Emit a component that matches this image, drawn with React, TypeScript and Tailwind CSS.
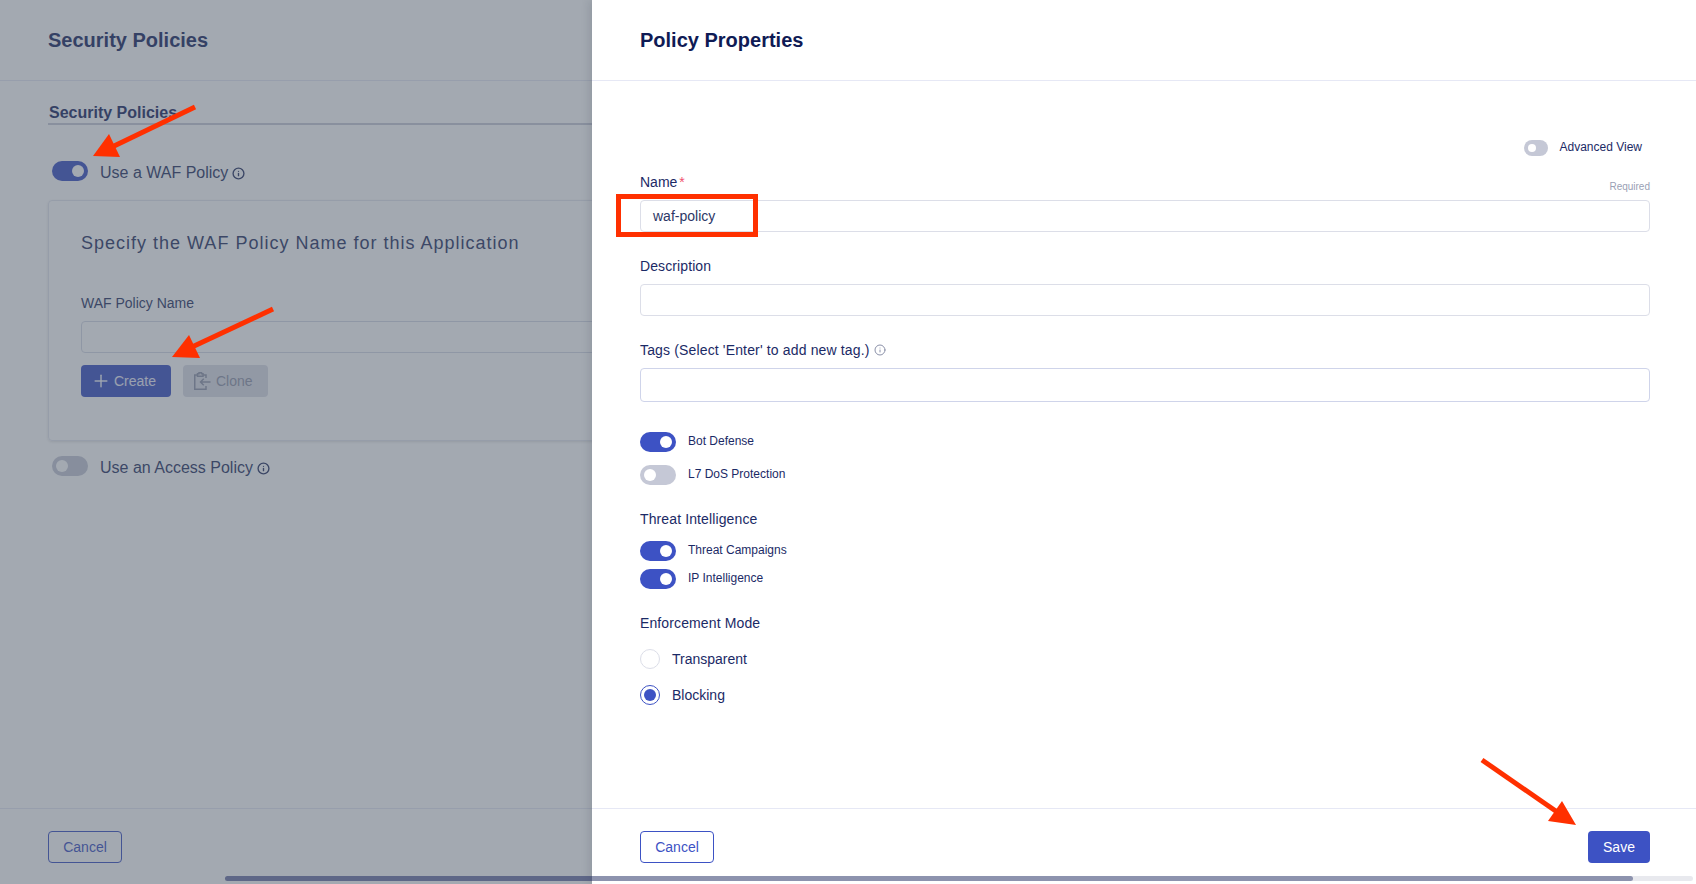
import { Info, Plus } from 'lucide-react';

const font = "font-['Liberation_Sans',Arial,sans-serif]";

function Toggle({ on, size = 'md' }: { on: boolean; size?: 'sm' | 'md' }) {
  if (size === 'sm') {
    return (
      <span className="flex h-4 w-6 shrink-0 items-center justify-start rounded-full bg-[#c5c8d6] pl-1">
        <span className="h-2 w-2 rounded-full bg-white" />
      </span>
    );
  }
  return (
    <span
      className={`flex h-5 w-9 shrink-0 items-center rounded-full px-1 ${
        on ? 'justify-end bg-[#3d52c4]' : 'justify-start bg-[#c5c8d6]'
      }`}
    >
      <span className="h-3 w-3 rounded-full bg-white" />
    </span>
  );
}

function SmallToggle({ label, on }: { label: string; on: boolean }) {
  return (
    <div className="flex h-5 items-center gap-3">
      <Toggle on={on} />
      <span className="mb-0.5 text-xs leading-4 text-[#1b2a66]">{label}</span>
    </div>
  );
}

function Radio({ label, checked }: { label: string; checked: boolean }) {
  return (
    <div className="flex h-5 items-center gap-3">
      <span
        className={`flex h-5 w-5 items-center justify-center rounded-full border bg-white ${
          checked ? 'border-[#3d52c4]' : 'border-[#dcdee8]'
        }`}
      >
        {checked && <span className="h-3 w-3 rounded-full bg-[#3d52c4]" />}
      </span>
      <span className="text-sm text-[#1b2a66]">{label}</span>
    </div>
  );
}

function CloneIcon() {
  return (
    <svg width="17" height="18" viewBox="0 0 17 18" fill="none" stroke="currentColor" strokeWidth="1.5">
      <path d="M3.5 3H.75v14.25H12V14M12 6V3H9" />
      <path d="M3.5 4.25V1.75h1.5V.75h2.5v1h1.5v2.5z" />
      <path d="M16.5 10H6.5M9.75 6.75 6.5 10l3.25 3.25" />
    </svg>
  );
}

function Arrow({ points, tail }: { points: string; tail: [number, number, number, number] }) {
  return (
    <g>
      <line x1={tail[0]} y1={tail[1]} x2={tail[2]} y2={tail[3]} stroke="#ff3000" strokeWidth="5" />
      <polygon points={points} fill="#ff3000" />
    </g>
  );
}

function BehindPage() {
  return (
    <div className="flex h-full w-full flex-col bg-white">
      <div className="flex h-[81px] shrink-0 items-center border-b border-[#e6e8f5] pl-12">
        <h1 className="text-xl font-bold text-[#1c2a63]">Security Policies</h1>
      </div>
      <div className="flex-1 pl-12 pt-[22px]">
        <div className="border-b-2 border-[#c9ccd9] pl-px text-base leading-5 font-bold text-[#1c2a63]">
          Security Policies
        </div>
        <div className="mt-9 flex h-5 items-center pl-1">
          <Toggle on />
          <span className="ml-3 mt-1 text-base text-[#2c3766]">Use a WAF Policy</span>
          <Info size={13} strokeWidth={2.5} className="ml-1 mt-1 text-[#2c3766]" />
        </div>
        <div className="mt-[19px] h-[241px] rounded border border-[#e4e6ee] pl-8 pt-7 shadow-[0_1px_3px_rgba(0,0,0,0.12)]">
          <h2 className="text-lg leading-7 tracking-[1px] text-[#2c3766]">
            Specify the WAF Policy Name for this Application
          </h2>
          <label className="mt-[36px] block text-sm leading-5 text-[#2c3766]">WAF Policy Name</label>
          <div className="mt-2 h-8 rounded border border-[#d7dae6]" />
          <div className="mt-3 flex gap-3">
            <button className="flex h-8 w-[90px] items-center gap-[3px] rounded-sm bg-[#3d52c4] pl-2.5 text-sm text-white/90">
              <Plus size={20} strokeWidth={1.8} />
              Create
            </button>
            <button className="flex h-8 w-[85px] items-center gap-[5px] rounded-sm bg-[#dddee7] pl-[11px] text-sm text-[#9196aa]">
              <CloneIcon />
              Clone
            </button>
          </div>
        </div>
        <div className="mt-[15px] flex h-5 items-center pl-1">
          <Toggle on={false} />
          <span className="ml-3 mt-1 text-base text-[#2c3766]">Use an Access Policy</span>
          <Info size={13} strokeWidth={2.5} className="ml-1 mt-1 text-[#2c3766]" />
        </div>
      </div>
      <div className="h-[76px] shrink-0 border-t border-[#e6e8f5] pl-12 pt-[22px]">
        <button className="h-8 w-[74px] rounded border border-[#3d52c4] text-sm text-[#3d52c4]">Cancel</button>
      </div>
    </div>
  );
}

function PolicyDrawer() {
  return (
    <aside className="absolute bottom-0 right-0 top-0 flex w-[1104px] flex-col bg-white shadow-[-3px_0_8px_rgba(30,40,60,0.12)]">
      <div className="flex h-[81px] shrink-0 items-center border-b border-[#e6e8f5] pl-12">
        <h1 className="text-xl font-bold text-[#0f1b55]">Policy Properties</h1>
      </div>
      <div className="flex-1 pl-12 pr-[46px]">
        <div className="mt-[59px] flex h-4 items-center justify-end pr-2">
          <Toggle on={false} size="sm" />
          <span className="mb-0.5 ml-3 text-xs text-[#1b2a66]">Advanced View</span>
        </div>
        <div className="mt-4 flex h-5 items-end justify-between">
          <label className="text-sm leading-5 text-[#1b2a66]">
            Name<span className="ml-0.5 text-[#f0506e]">*</span>
          </label>
          <span className="-mb-px text-[10px] leading-3 text-[#9a9fb5]">Required</span>
        </div>
        <div className="mt-2 flex h-8 items-center rounded border border-[#dcdee8] pl-3 text-sm text-[#2c3766]">
          waf-policy
        </div>
        <label className="mt-6 block text-sm leading-5 tracking-[0.1px] text-[#1b2a66]">Description</label>
        <div className="mt-2 h-8 rounded border border-[#dcdee8]" />
        <label className="mt-6 flex h-5 items-center gap-1 text-sm tracking-[0.15px] text-[#1b2a66]">
          {"Tags (Select 'Enter' to add new tag.)"}
          <Info size={12} strokeWidth={2} className="text-[#8a90a8]" />
        </label>
        <div className="mt-2 h-[34px] rounded border border-[#cfd4ea]" />
        <div className="mt-[30px] flex flex-col gap-[13px]">
          <SmallToggle label="Bot Defense" on />
          <SmallToggle label="L7 DoS Protection" on={false} />
        </div>
        <div className="mt-6 text-sm leading-5 tracking-[0.12px] text-[#1b2a66]">Threat Intelligence</div>
        <div className="mt-3 flex flex-col gap-2">
          <SmallToggle label="Threat Campaigns" on />
          <SmallToggle label="IP Intelligence" on />
        </div>
        <div className="mt-6 text-sm leading-5 tracking-[0.12px] text-[#1b2a66]">Enforcement Mode</div>
        <div className="mt-4 flex flex-col gap-4">
          <Radio label="Transparent" checked={false} />
          <Radio label="Blocking" checked />
        </div>
      </div>
      <div className="flex h-[76px] shrink-0 items-start justify-between border-t border-[#e6e8f5] pl-12 pr-[46px] pt-[22px]">
        <button className="h-8 w-[74px] rounded border border-[#3d52c4] text-sm text-[#3d52c4]">Cancel</button>
        <button className="h-8 w-[62px] rounded-sm bg-[#3d52c4] text-sm text-white">Save</button>
      </div>
    </aside>
  );
}

export default function App() {
  return (
    <div className={`relative h-[884px] w-full overflow-hidden bg-white ${font}`}>
      <BehindPage />
      <div className="absolute inset-0 bg-[rgba(75,88,103,0.515)]" />
      <PolicyDrawer />

      {/* page scrollbar, translucent so it picks up the dimmed page on the left */}
      <div className="absolute bottom-[3px] left-[225px] right-[3px] h-[5px] rounded-full bg-[rgba(25,36,93,0.1)]">
        <div className="h-full w-[1408px] rounded-full bg-[rgba(25,36,93,0.44)]" />
      </div>

      {/* red annotations drawn on the screenshot */}
      <svg className="pointer-events-none absolute inset-0" width="1696" height="884" fill="none">
        <Arrow tail={[195, 107, 112, 147]} points="93,156 109,134 120,157" />
        <Arrow tail={[273, 309, 192, 347]} points="172,357 189,335 200,358" />
        <Arrow tail={[1482, 760, 1560, 814]} points="1576,825 1562,801 1548,821" />
        <rect x="618.5" y="196.5" width="137" height="38" stroke="#ff3000" strokeWidth="5" />
      </svg>
    </div>
  );
}
